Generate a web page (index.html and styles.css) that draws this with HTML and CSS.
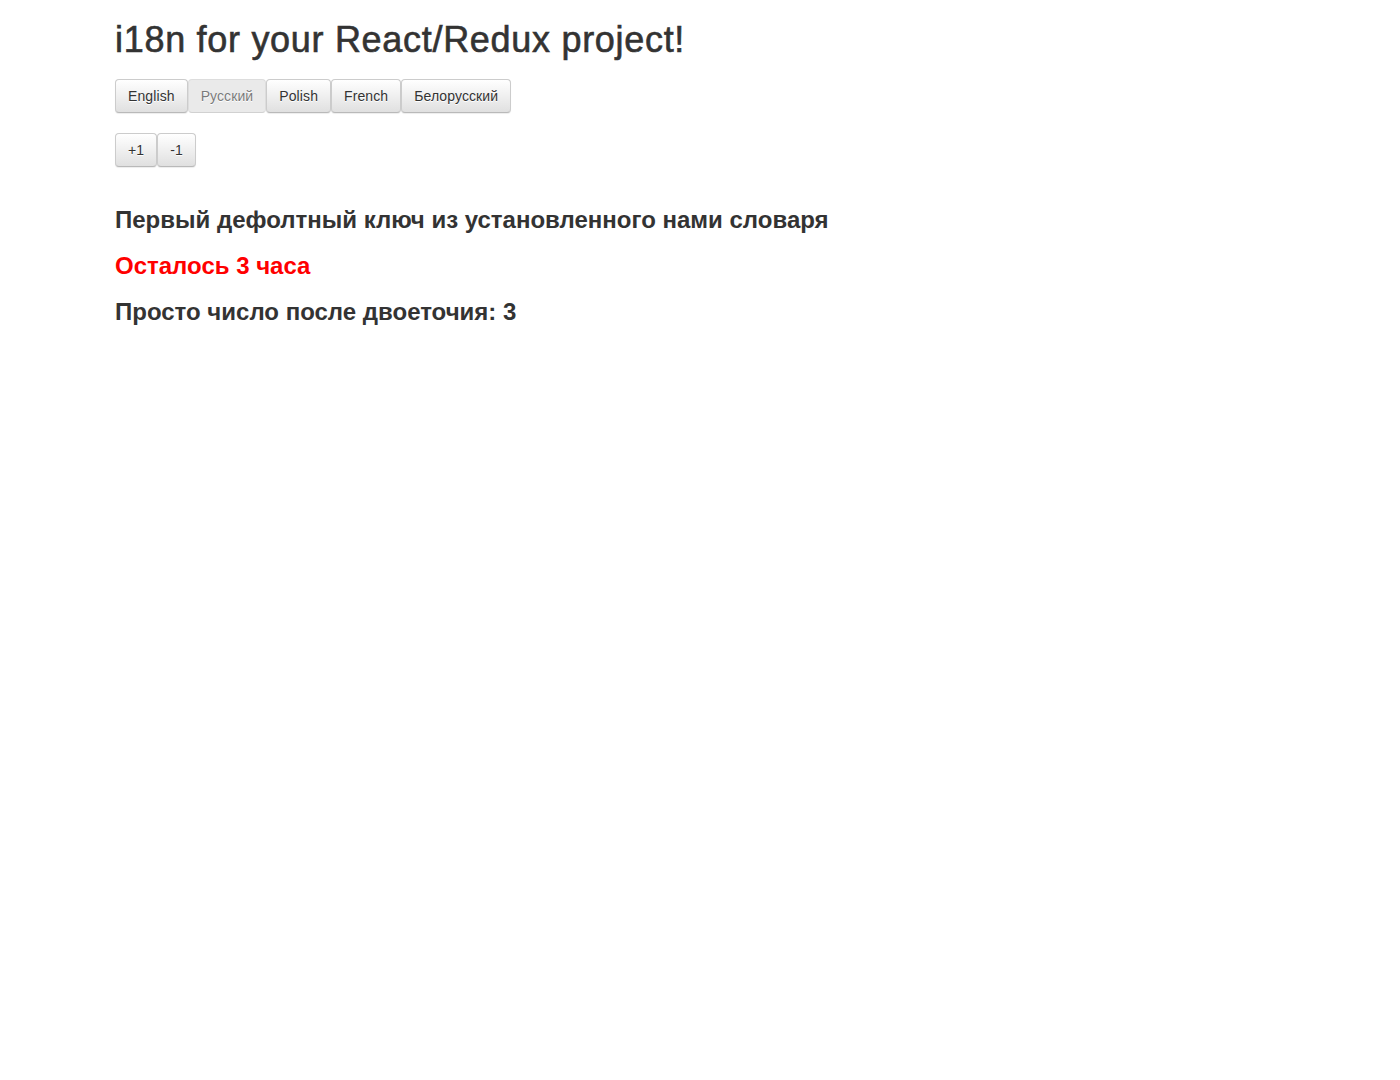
FILE: index.html
```html
<!DOCTYPE html>
<html>
<head>
<meta charset="utf-8">
<title>i18n</title>
<link rel="stylesheet" href="styles.css">
</head>
<body>
<div class="container">
  <h1 class="title">i18n for your React/Redux project!</h1>
  <div class="btn-row"><button class="btn">English</button><button class="btn" disabled>Русский</button><button class="btn">Polish</button><button class="btn">French</button><button class="btn">Белорусский</button></div>
  <div class="btn-row"><button class="btn">+1</button><button class="btn">-1</button></div>
  <div class="texts">
    <h3 class="line">Первый дефолтный ключ из установленного нами словаря</h3>
    <h3 class="line red">Осталось 3 часа</h3>
    <h3 class="line">Просто число после двоеточия: 3</h3>
  </div>
</div>
</body>
</html>
```

FILE: styles.css
```css
html, body {
  margin: 0;
  padding: 0;
  background: #fff;
}
body {
  font-family: "Liberation Sans", Arial, sans-serif;
  font-size: 14px;
  line-height: 1.42857;
  color: #333;
}
.container {
  width: 1170px;
  margin: 0 auto;
}
.title {
  font-size: 36px;
  font-weight: 400;
  line-height: 1.1;
  letter-spacing: 0.7px;
  -webkit-text-stroke: 0.6px #333;
  margin: 20px 0 19px;
}
.btn-row {
  display: flex;
  margin-bottom: 20px;
}
.btn {
  font-family: inherit;
  font-size: 14px;
  line-height: 20px;
  padding: 6px 12px;
  letter-spacing: 0.1px;
  color: #333;
  border: 1px solid #ccc;
  border-bottom-color: #b9b9b9;
  border-radius: 4px;
  background-color: #e0e0e0;
  background-image: linear-gradient(to bottom, #fff 0%, #e0e0e0 100%);
  box-shadow: inset 0 1px 0 rgba(255,255,255,.15), 0 1px 1px rgba(0,0,0,.075);
  text-shadow: 0 1px 0 #fff;
  cursor: pointer;
  margin: 0;
}
.btn:disabled {
  background-image: none;
  background-color: #e0e0e0;
  opacity: .65;
  box-shadow: none;
  cursor: not-allowed;
}
.texts {
  margin-top: 40px;
}
.line {
  font-size: 24px;
  font-weight: 700;
  line-height: 1.1;
  margin: 20px 0 10px;
}
.red {
  color: #f00;
}
```
